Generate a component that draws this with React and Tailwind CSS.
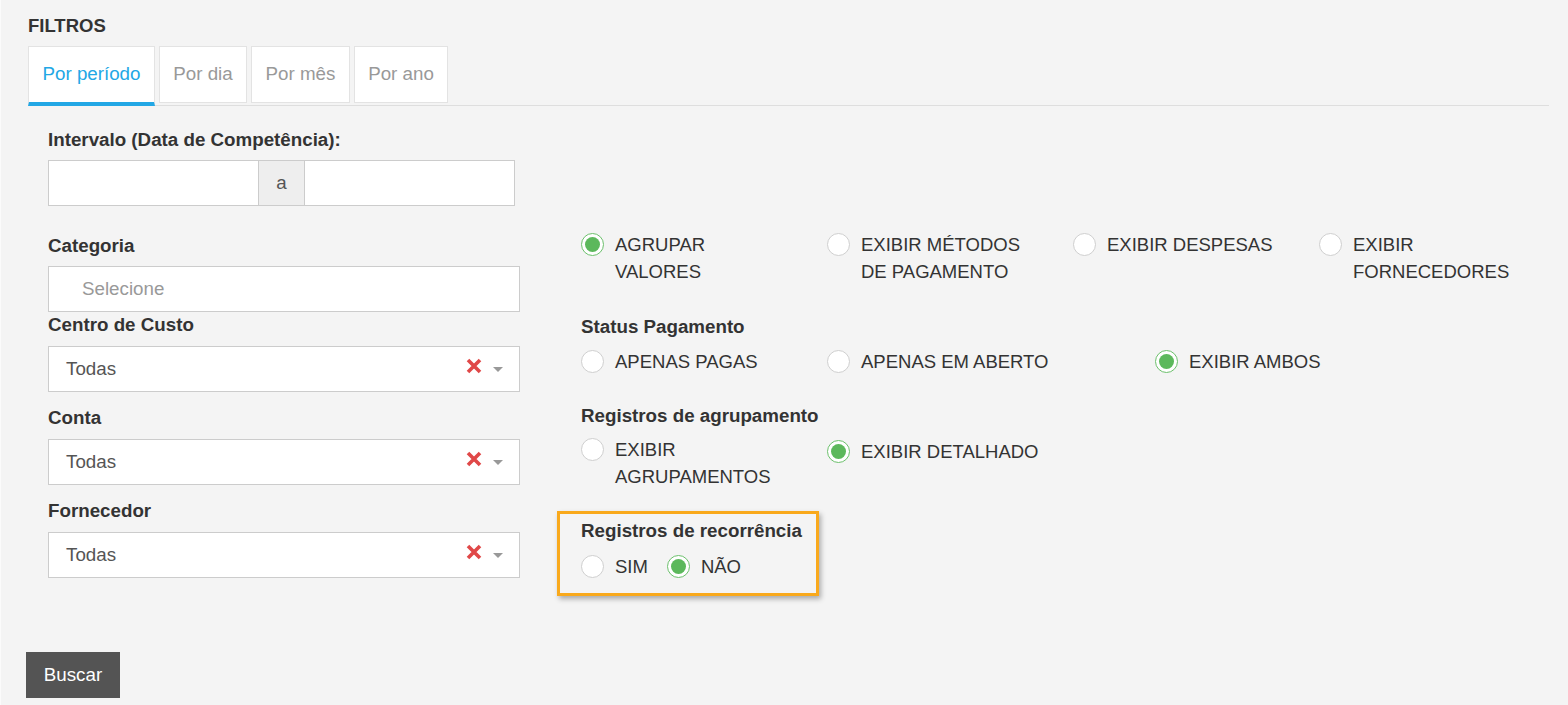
import React from 'react';

const Radio = ({ checked }) => (
  <span
    className={
      'mt-[2px] flex h-[23px] w-[23px] shrink-0 items-center justify-center rounded-full bg-white border ' +
      (checked ? 'border-[#6cc06c]' : 'border-[#cfcfcf]')
    }
  >
    {checked && <span className="h-[15px] w-[15px] rounded-full bg-[#5cb85c]" />}
  </span>
);

const Option = ({ label, checked, narrow, className = '' }) => (
  <div className={'flex items-start ' + className}>
    <Radio checked={checked} />
    <span
      className={
        'ml-[11px] text-[18.5px] leading-[27px] text-[#333] ' + (narrow ? 'max-w-[176px]' : 'whitespace-nowrap')
      }
    >
      {label}
    </span>
  </div>
);

const Label = ({ children, className = '' }) => (
  <div className={'text-[18.75px] font-bold leading-[22px] text-[#333] ' + className}>{children}</div>
);

const ClearX = () => (
  <svg width="16" height="16" viewBox="0 0 16 16" className="-mt-[6px] mr-[11px]">
    <path d="M2 2 L14 14 M14 2 L2 14" stroke="#e04848" strokeWidth="3.6" />
  </svg>
);

const SelectBox = ({ value }) => (
  <div className="flex h-[46px] items-center border border-[#ccc] bg-white pl-[17px] pr-[16px]">
    <span className="flex-1 text-[18.75px] text-[#555]">{value}</span>
    <ClearX />
    <span className="h-0 w-0 border-x-[5px] border-t-[5px] border-x-transparent border-t-[#999]" />
  </div>
);

const tabs = [
  { label: 'Por período', w: 'w-[127px]' },
  { label: 'Por dia', w: 'w-[88px]' },
  { label: 'Por mês', w: 'w-[99px]' },
  { label: 'Por ano', w: 'w-[94px]' },
];

export default function App() {
  return (
    <div className="min-h-screen border-l border-[#fbfbfb] bg-[#f4f4f4] pl-[27px] pr-[19px] pt-[16px] font-['Liberation_Sans',Arial,sans-serif]">
      <div className="text-[18.5px] font-bold leading-[20px] text-[#333]">FILTROS</div>

      <div className="mt-[10px] flex items-start gap-[4px] border-b border-[#dedede]">
        {tabs.map((t, i) =>
          i === 0 ? (
            <div
              key={t.label}
              className={
                '-mb-px flex h-[60px] items-center justify-center whitespace-nowrap border border-b-[4px] border-[#e3e3e3] border-b-[#22a7e5] bg-white text-[18.75px] text-[#22a7e5] ' +
                t.w
              }
            >
              {t.label}
            </div>
          ) : (
            <div
              key={t.label}
              className={
                'flex h-[57px] items-center justify-center whitespace-nowrap border border-[#e3e3e3] bg-white text-[18.75px] text-[#999] ' +
                t.w
              }
            >
              {t.label}
            </div>
          )
        )}
      </div>

      <div className="pl-[20px] pt-[23px]">
        <Label className="mb-[9px]">Intervalo (Data de Competência):</Label>
        <div className="flex h-[46px] w-[467px]">
          <div className="w-[211px] border border-[#ccc] bg-white" />
          <div className="flex w-[45px] items-center justify-center border-y border-[#ccc] bg-[#eee] text-[18.75px] text-[#555]">
            a
          </div>
          <div className="w-[211px] border border-[#ccc] bg-white" />
        </div>

        <div className="flex items-start">
          <div className="w-[472px] shrink-0 pt-[29px]">
            <Label className="mb-[9px]">Categoria</Label>
            <div className="flex h-[46px] items-center border border-[#ccc] bg-white pl-[33px] text-[18.75px] text-[#999]">
              Selecione
            </div>
            <Label className="mb-[10px] mt-[2px]">Centro de Custo</Label>
            <SelectBox value="Todas" />
            <Label className="mb-[10px] mt-[15px]">Conta</Label>
            <SelectBox value="Todas" />
            <Label className="mb-[10px] mt-[15px]">Fornecedor</Label>
            <SelectBox value="Todas" />
          </div>

          <div className="ml-[61px] shrink-0 pt-[25px]">
            <div className="flex">
              <Option className="w-[246px]" narrow checked label="AGRUPAR VALORES" />
              <Option className="w-[246px]" narrow label="EXIBIR MÉTODOS DE PAGAMENTO" />
              <Option className="w-[246px]" narrow label="EXIBIR DESPESAS" />
              <Option className="w-[200px]" narrow label="EXIBIR FORNECEDORES" />
            </div>

            <Label className="mt-[31px]">Status Pagamento</Label>
            <div className="mt-[10px] flex">
              <Option className="w-[246px]" label="APENAS PAGAS" />
              <Option className="w-[328px]" label="APENAS EM ABERTO" />
              <Option checked label="EXIBIR AMBOS" />
            </div>

            <Label className="mt-[30px]">Registros de agrupamento</Label>
            <div className="mt-[9px] flex">
              <Option className="w-[246px]" narrow label="EXIBIR AGRUPAMENTOS" />
              <Option className="mt-[2px]" checked label="EXIBIR DETALHADO" />
            </div>

            <div className="-ml-[24px] mt-[21px] w-[262px] border-[3px] border-[#f9a91c] pb-[13px] pl-[21px] pt-[6px] shadow-[2px_3px_5px_rgba(0,0,0,0.3)]">
              <Label>Registros de recorrência</Label>
              <div className="mt-[11px] flex">
                <Option className="mr-[19px]" label="SIM" />
                <Option checked label="NÃO" />
              </div>
            </div>
          </div>
        </div>
      </div>

      <button className="-ml-[2px] mt-[56px] h-[46px] w-[94px] bg-[#545454] text-[18.75px] text-white">
        Buscar
      </button>
    </div>
  );
}
